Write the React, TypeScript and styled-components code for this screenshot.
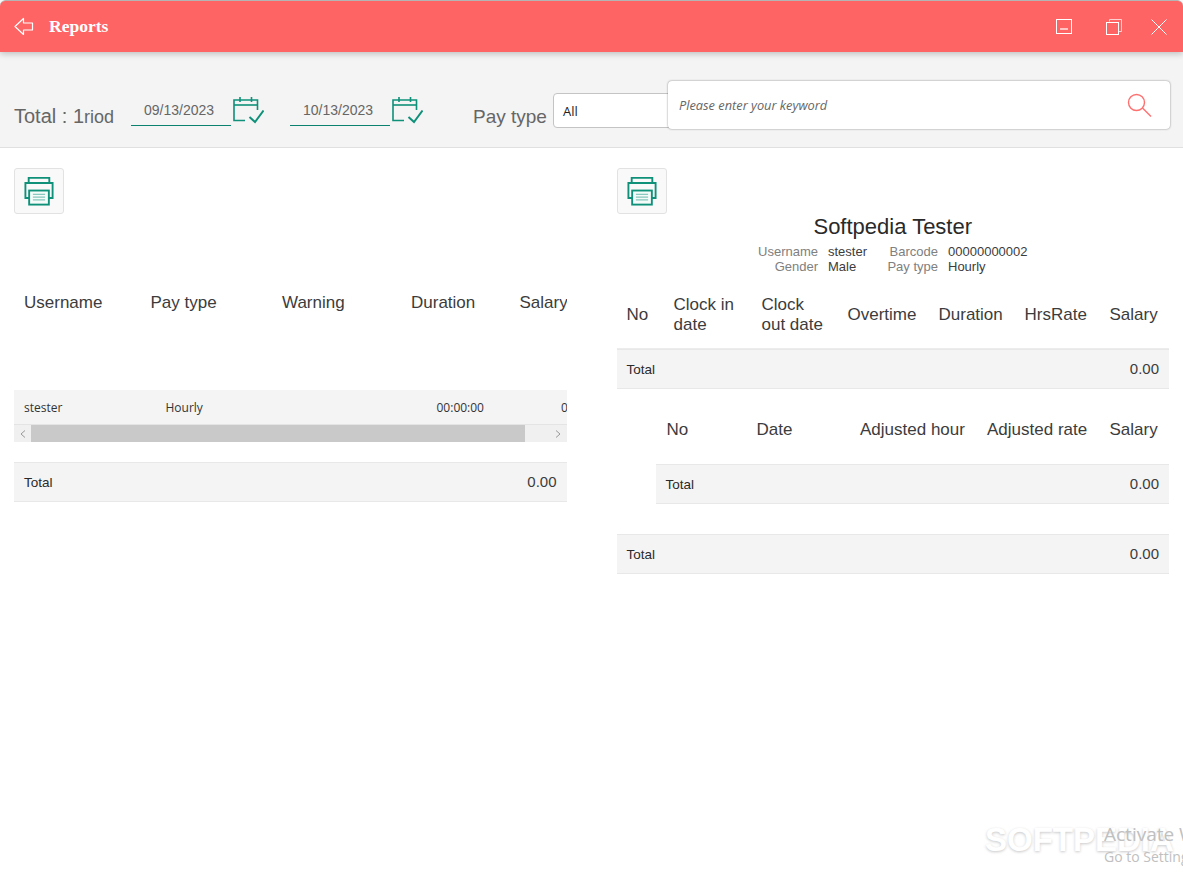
import React from "react";
import styled, { createGlobalStyle } from "styled-components";

const Global = createGlobalStyle`
  html, body { margin: 0; padding: 0; background: #fff; }
  body { font-family: "Liberation Sans", Arial, sans-serif; color: #333; }
  #root { width: 1183px; height: 879px; overflow: hidden; }
`;

const Page = styled.div`
  position: relative;
  width: 1183px;
  height: 879px;
  overflow: hidden;
  background: #fff;
`;

const TitleBar = styled.header`
  position: relative;
  z-index: 2;
  box-sizing: border-box;
  height: 52px;
  display: flex;
  align-items: center;
  background: #ff6464;
  border-top: 1px solid #b4b4b4;
  border-radius: 6px 6px 0 0;
  box-shadow: 0 2px 6px rgba(0, 0, 0, 0.22);
  padding: 0 16px 0 14px;
`;

const Title = styled.h1`
  margin: 0 0 0 15px;
  font: 700 17.5px "Liberation Serif", serif;
  color: #fff;
  flex: 1;
`;

const WinButtons = styled.div`
  display: flex;
  align-items: center;
  gap: 29px;
`;

const Toolbar = styled.section`
  position: relative;
  box-sizing: border-box;
  height: 96px;
  background: #f4f4f4;
  border-bottom: 1px solid #e0e0e0;
  display: flex;
  align-items: flex-end;
  padding: 0 0 18px 14px;
`;

const TotalLabel = styled.span`
  font-size: 20px;
  line-height: 24px;
  color: #666;
  width: 117px;
  span { font-size: 18px; }
`;

const DateGroup = styled.div`
  display: flex;
  align-items: flex-end;
  margin-right: 26px;
  margin-bottom: 3px;
  svg { margin: 0 0 2px 2px; }
`;

const DateField = styled.div`
  box-sizing: border-box;
  width: 100px;
  height: 30px;
  line-height: 28px;
  text-align: center;
  padding-right: 4px;
  font-size: 14px;
  color: #666;
  border-bottom: 1px solid #0b8270;
`;

const PayLabel = styled.span`
  font-size: 19px;
  line-height: 24px;
  color: #666;
  margin-left: 24px;
  width: 80px;
`;

const Select = styled.div`
  box-sizing: border-box;
  width: 130px;
  height: 35px;
  padding-left: 9px;
  font: 13px/35px "Open Sans", sans-serif;
  color: #222;
  background: #fff;
  border: 1px solid #c4c4c4;
  border-radius: 4px;
  margin-bottom: 1px;
`;

const SearchCard = styled.div`
  position: absolute;
  left: 668px;
  top: 29px;
  box-sizing: border-box;
  width: 502px;
  height: 48px;
  background: #fff;
  border-radius: 4px;
  box-shadow: 0 0 2px rgba(0, 0, 0, 0.5);
  display: flex;
  align-items: center;
  padding: 0 18px 0 11px;
  font: italic 12.8px "Open Sans", sans-serif;
  color: #666;
  justify-content: space-between;
`;

const Columns = styled.main`
  display: flex;
  padding: 20px 14px 0 14px;
  gap: 50px;
`;

const Panel = styled.div`
  width: 552.5px;
  flex: none;
`;

const PrintButton = styled.div`
  box-sizing: border-box;
  width: 50px;
  height: 46px;
  display: flex;
  align-items: center;
  justify-content: center;
  background: #f9f9f9;
  border: 1px solid #e2e2e2;
  border-radius: 3px;
`;

const LeftHead = styled.div`
  position: relative;
  height: 176px;
  overflow: hidden;
`;

const HeadRow = styled.div<{ $cols: string; $pad?: number }>`
  display: grid;
  grid-template-columns: ${(p) => p.$cols};
  padding-left: ${(p) => p.$pad ?? 10}px;
  font-size: 17px;
  line-height: 20px;
  color: #3c3c3c;
  align-items: center;
`;

const LeftHeadRow = styled(HeadRow)`
  margin-top: 79px;
`;

const DataRow = styled.div`
  box-sizing: border-box;
  height: 35px;
  background: #f4f4f4;
  border-bottom: 1px solid #e4e4e4;
  display: grid;
  grid-template-columns: 141.5px 271px 124.5px 20px;
  padding-left: 10px;
  align-items: center;
  font: 12px "Open Sans", sans-serif;
  color: #333;
  overflow: hidden;
  white-space: nowrap;
`;

const Scrollbar = styled.div`
  height: 17px;
  background: #f0f0f0;
  display: flex;
  align-items: stretch;
`;

const ScrollArrow = styled.div<{ $end?: boolean }>`
  box-sizing: border-box;
  width: ${(p) => (p.$end ? 42 : 17)}px;
  display: flex;
  align-items: center;
  justify-content: ${(p) => (p.$end ? "flex-end" : "center")};
  padding-right: ${(p) => (p.$end ? 6 : 0)}px;
  flex: none;
`;

const ScrollThumb = styled.div`
  flex: 1;
  background: #c9c9c9;
`;

const TotalRow = styled.div<{ $indent?: number; $mt?: number }>`
  box-sizing: border-box;
  height: 40px;
  margin-left: ${(p) => p.$indent ?? 0}px;
  margin-top: ${(p) => p.$mt ?? 0}px;
  background: #f4f4f4;
  border-top: 1px solid #e8e8e8;
  border-bottom: 1px solid #e8e8e8;
  display: flex;
  align-items: center;
  justify-content: space-between;
  padding: 0 10px;
  font: 13.5px "Liberation Sans", sans-serif;
  color: #2a2a2a;
  b { font: 400 15px "Liberation Sans", sans-serif; color: #3c3c3c; margin-bottom: 2px; }
`;

const RightTop = styled.div`
  height: 46px;
`;

const Person = styled.div`
  text-align: center;
`;

const PersonName = styled.div`
  font-size: 22px;
  line-height: 26px;
  color: #2a2a2a;
`;

const Meta = styled.div`
  display: grid;
  grid-template-columns: 60px auto 60px auto;
  column-gap: 10px;
  width: max-content;
  margin: 4px 0 0 141.5px;
  font-size: 13px;
  line-height: 15px;
  text-align: left;
  white-space: nowrap;
`;

const MetaKey = styled.span`
  color: #808080;
  text-align: right;
`;

const MetaVal = styled.span<{ $wide?: boolean }>`
  color: #3c3c3c;
  width: ${(p) => (p.$wide ? "auto" : "40px")};
`;

const RightHead = styled(HeadRow)`
  height: 69px;
  margin-top: 6px;
  padding-top: 2px;
  border-bottom: 1px solid #ececec;
  box-sizing: border-box;
`;

const SubHead = styled(HeadRow)`
  box-sizing: border-box;
  height: 75px;
  padding-top: 6px;
`;

const Watermark = styled.div`
  position: absolute;
  left: 985px;
  top: 821px;
  font: 700 33px "Liberation Sans", sans-serif;
  color: #fff;
  text-shadow: 0 1px 3px rgba(0, 0, 0, 0.22);
`;

const Activate = styled.div`
  position: absolute;
  left: 1104px;
  top: 823px;
  width: 79px;
  overflow: hidden;
  white-space: nowrap;
  color: #c0c0c0;
  font: 19px/22px "Open Sans", sans-serif;
  small { display: block; font-size: 14px; line-height: 24px; }
`;

const Back = () => (
  <svg width="20" height="20" viewBox="0 0 20 20" fill="none" stroke="#fff" strokeWidth="1.2">
    <path d="M1 9.5 9.5 1.5V6H18.5V13H9.5V17.5Z" strokeLinejoin="round" />
  </svg>
);

const Minimize = () => (
  <svg width="21" height="15" viewBox="0 0 21 15" fill="none">
    <rect x="0.5" y="0.5" width="15" height="14" stroke="#fff" />
    <path d="M4 10H12" stroke="#ffc4c4" strokeWidth="2" />
  </svg>
);

const Restore = () => (
  <svg width="16" height="16" viewBox="0 0 16 16" fill="none">
    <path d="M3.5 2.5V.5H15.5V12.5H12.5" stroke="#ffd0d0" />
    <rect x="0.5" y="3.5" width="12" height="12" stroke="#fff" />
  </svg>
);

const Close = () => (
  <svg width="16" height="16" viewBox="0 0 16 16" fill="none" stroke="#fff">
    <path d="M.5.5 15.500 15.500M15.500.5.5 15.500" />
  </svg>
);

const Calendar = () => (
  <svg width="31" height="28" viewBox="0 0 31 28" fill="none" stroke="#0e9079" strokeWidth="1.6">
    <path d="M12 24.500H1V4H24.500V14" />
    <path d="M1 9H24.500" />
    <path d="M7 1V6M18.500 1V6" />
    <path d="M16.500 21 22 26 30.500 14.500" strokeWidth="2" />
  </svg>
);

const SearchIcon = () => (
  <svg width="25" height="25" viewBox="0 0 25 25" fill="none" stroke="#ff7070" strokeWidth="1.4">
    <circle cx="9.500" cy="9.500" r="8" />
    <path d="M15.500 15 24 23.500" />
  </svg>
);

const Printer = () => (
  <svg width="30" height="30" viewBox="0 0 32 31" fill="none" stroke="#0e9079" strokeWidth="2">
    <path d="M5 7V1.500H27V7" />
    <path d="M6 23H1.500V7H30.500V23H26" />
    <rect x="5.500" y="15" width="21" height="15" fill="#f4fbf9" />
    <path d="M9.500 19H22.500M9.500 22H22.500M9.500 25H22.500" strokeWidth="1" stroke="#62b5a7" />
  </svg>
);

const Chevron = ({ left }: { left?: boolean }) => (
  <svg width="6" height="8" viewBox="0 0 6 8" fill="none" stroke="#999">
    <path d={left ? "M5 .5 1 4l4 3.500" : "M1 .5 5 4 1 7.500"} />
  </svg>
);

export default function App() {
  return (
    <Page>
      <Global />
      <TitleBar>
        <Back />
        <Title>Reports</Title>
        <WinButtons>
          <Minimize />
          <Restore />
          <Close />
        </WinButtons>
      </TitleBar>
      <Toolbar>
        <TotalLabel>
          Total : 1<span>riod</span>
        </TotalLabel>
        <DateGroup>
          <DateField>09/13/2023</DateField>
          <Calendar />
        </DateGroup>
        <DateGroup>
          <DateField>10/13/2023</DateField>
          <Calendar />
        </DateGroup>
        <PayLabel>Pay type</PayLabel>
        <Select>All</Select>
        <SearchCard>
          Please enter your keyword
          <SearchIcon />
        </SearchCard>
      </Toolbar>
      <Columns>
        <Panel>
          <PrintButton>
            <Printer />
          </PrintButton>
          <LeftHead>
            <LeftHeadRow $cols="126.500px 131.500px 129px 108.500px 80px">
              <span>Username</span>
              <span>Pay type</span>
              <span>Warning</span>
              <span>Duration</span>
              <span>Salary</span>
            </LeftHeadRow>
          </LeftHead>
          <DataRow>
            <span>stester</span>
            <span>Hourly</span>
            <span>00:00:00</span>
            <span>0</span>
          </DataRow>
          <Scrollbar>
            <ScrollArrow>
              <Chevron left />
            </ScrollArrow>
            <ScrollThumb />
            <ScrollArrow $end>
              <Chevron />
            </ScrollArrow>
          </Scrollbar>
          <TotalRow $mt={20}>
            Total<b>0.00</b>
          </TotalRow>
        </Panel>
        <Panel>
          <RightTop>
            <PrintButton>
              <Printer />
            </PrintButton>
          </RightTop>
          <Person>
            <PersonName>Softpedia Tester</PersonName>
            <Meta>
              <MetaKey>Username</MetaKey>
              <MetaVal>stester</MetaVal>
              <MetaKey>Barcode</MetaKey>
              <MetaVal $wide>00000000002</MetaVal>
              <MetaKey>Gender</MetaKey>
              <MetaVal>Male</MetaVal>
              <MetaKey>Pay type</MetaKey>
              <MetaVal $wide>Hourly</MetaVal>
            </Meta>
          </Person>
          <RightHead $cols="47px 88px 86px 91px 86px 85px 60px">
            <span>No</span>
            <span>Clock in date</span>
            <span>
              Clock
              <br />
              out date
            </span>
            <span>Overtime</span>
            <span>Duration</span>
            <span>HrsRate</span>
            <span>Salary</span>
          </RightHead>
          <TotalRow>
            Total<b>0.00</b>
          </TotalRow>
          <SubHead $cols="90px 103.500px 127px 122.500px 60px" $pad={50}>
            <span>No</span>
            <span>Date</span>
            <span>Adjusted hour</span>
            <span>Adjusted rate</span>
            <span>Salary</span>
          </SubHead>
          <TotalRow $indent={39}>
            Total<b>0.00</b>
          </TotalRow>
          <TotalRow $mt={30}>
            Total<b>0.00</b>
          </TotalRow>
        </Panel>
      </Columns>
      <Watermark>SOFTPEDIA</Watermark>
      <Activate>
        Activate Windows
        <small>Go to Settings</small>
      </Activate>
    </Page>
  );
}
